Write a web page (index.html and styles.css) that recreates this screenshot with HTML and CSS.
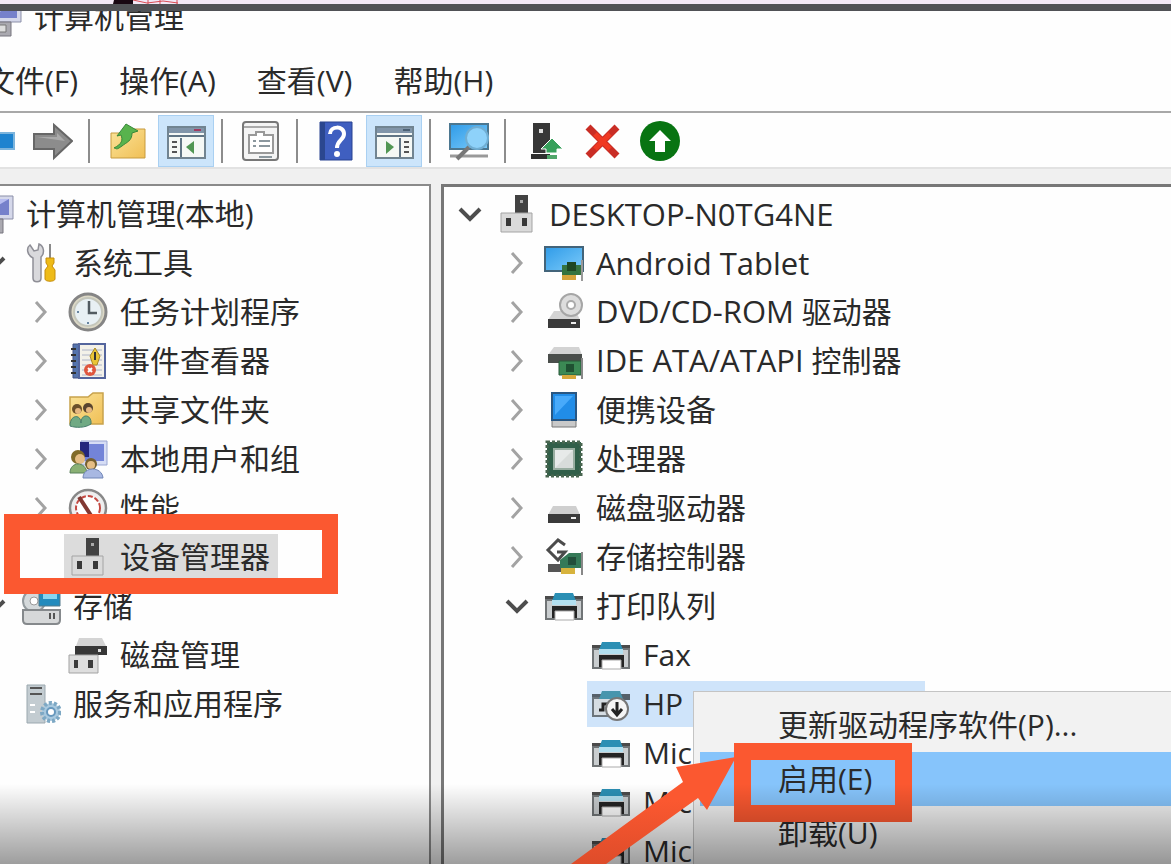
FILE: index.html
```
<!DOCTYPE html>
<html lang="zh-CN">
<head>
  <meta charset="utf-8">
  <title>计算机管理</title>
  <link rel="stylesheet" href="styles.css">
</head>
<body>
  <!-- Icon set, 40 x 40 each -->
  <svg class="sprite" aria-hidden="true">
    <defs>
      <linearGradient id="blue" x1="0" y1="0" x2="1" y2="1"><stop offset="0" stop-color="#2f9be8"/><stop offset="1" stop-color="#7ccbfa"/></linearGradient>
      <linearGradient id="gold" x1="0" y1="0" x2="1" y2="1"><stop offset="0" stop-color="#fbe49a"/><stop offset="1" stop-color="#f0bf55"/></linearGradient>
    </defs>
    <symbol id="computer" viewBox="0 0 40 40">
      <path d="M10 2h29v23H10z" fill="#d5d8ea" stroke="#8b8fa8"/>
      <path d="M14 5h21v16H14z" fill="#7681cb"/><path d="M14 5h21L14 17z" fill="#b7bdf0"/>
      <path d="M4 25h25v14H4z" fill="#aaa9b0" stroke="#76757e"/><path d="M13 28h11v7H13z" fill="#ddd" stroke="#777"/>
    </symbol>
    <symbol id="device" viewBox="0 0 40 40">
      <path d="M18 1h13v18H18z" fill="#424242"/><path d="M23 6h3v3h-3z" fill="#aaa"/>
      <path d="M4 19h31v19H4z" fill="#dadada" stroke="#a4a4a4"/>
      <path d="M9 24h5v8H9zM25 24h5v8h-5z" fill="#383838"/>
    </symbol>
    <symbol id="tools" viewBox="0 0 40 40">
      <path d="M9 2l4 6 4-1 1-6c5 2 6 9 2 13v21c0 5-8 5-8 0V15C6 12 5 5 9 2z" fill="#d9d9dc" stroke="#8e8e96" stroke-width="1.5"/>
      <path d="M28 1h2v15h-2z" fill="#8a8a8a"/><path d="M25 15h8v5l-2 3 3 4v9c0 3-10 3-10 0v-9l3-4-2-3z" fill="#eebb18" stroke="#c68e0b"/>
    </symbol>
    <symbol id="clock" viewBox="0 0 40 40">
      <circle cx="20" cy="20" r="18" fill="#ddd9c6" stroke="#858585" stroke-width="3"/><circle cx="20" cy="20" r="14" fill="#e8f0f4" stroke="#c4c6bb" stroke-width="2"/>
      <path d="M21 9v12h8" fill="none" stroke="#525b61" stroke-width="2.5"/><path d="M9 20h2M20 30v2" stroke="#6784a0" stroke-width="2"/>
    </symbol>
    <symbol id="events" viewBox="0 0 40 40">
      <path d="M5 3h10v34H5z" fill="#5574ac" stroke="#405083"/><path d="M11 3h26v34H11z" fill="#f3f1e9" stroke="#54659d" stroke-width="2"/>
      <path d="M14 9h20M14 14h20M14 19h20M14 24h20M14 29h20M14 34h20" stroke="#aeb4c8"/>
      <path d="M3 8h5M3 14h5M3 20h5M3 26h5M3 32h5" stroke="#333" stroke-width="2"/>
      <path d="M27 7l5 8-3 9h-4l-3-9z" fill="#eac536" stroke="#a88929"/><path d="M27 11v8" stroke="#333" stroke-width="2"/>
      <circle cx="22" cy="29" r="6" fill="#df573e"/><path d="M20 27l4 4m0-4l-4 4" stroke="#fff" stroke-width="2"/>
    </symbol>
    <symbol id="shared" viewBox="0 0 40 40">
      <path d="M2 7h18l5-4h10v31H2z" fill="url(#gold)" stroke="#c8a24c" stroke-width="1.5"/>
      <circle cx="9" cy="19" r="5" fill="#6b502a"/><circle cx="20" cy="18" r="5" fill="#59452f"/><circle cx="10" cy="21" r="3" fill="#e6b780"/><circle cx="21" cy="20" r="3" fill="#e6b780"/>
      <path d="M2 36c0-12 11-12 11-3 0-10 11-9 10 1-6 4-15 4-21 2z" fill="#70aa84" stroke="#467d6b"/>
    </symbol>
    <symbol id="users" viewBox="0 0 40 40">
      <path d="M13 2h26v24H13z" fill="#d6ddf5" stroke="#9aa6d1"/><path d="M16 5h20v17H16z" fill="#7384d8"/><path d="M12 3h9v15h-9z" fill="#24277d"/>
      <circle cx="10" cy="18" r="7" fill="#816b28"/><circle cx="12" cy="20" r="5" fill="#e5bd84"/><path d="M2 34c0-12 16-12 17 0z" fill="#8ab074" stroke="#59805b"/>
      <circle cx="23" cy="25" r="6" fill="#76602f"/><circle cx="23" cy="26" r="4" fill="#e5bd84"/><path d="M15 39c0-12 19-12 20 0z" fill="#a8b8e2" stroke="#7186b7"/>
    </symbol>
    <symbol id="gauge" viewBox="0 0 40 40">
      <circle cx="20" cy="20" r="18" fill="#eee" stroke="#888" stroke-width="2.5"/><circle cx="20" cy="20" r="12" fill="#fff" stroke="#c44a43" stroke-width="2" stroke-dasharray="5 2"/><path d="M11 9l13 20" stroke="#813832" stroke-width="4"/>
    </symbol>
    <symbol id="storage" viewBox="0 0 40 40">
      <circle cx="13" cy="15" r="11" fill="#d4d9db" stroke="#929a9e" stroke-width="2"/><circle cx="13" cy="15" r="4" fill="#fff" stroke="#999"/>
      <path d="M18 6h21v14H18z" fill="#238bbd" stroke="#557b8b"/><path d="M22 8h14v5H22z" fill="#86d4f1"/>
      <path d="M2 24h37v10q0 4-4 4H6q-4 0-4-4z" fill="#d6d8d9" stroke="#85898c" stroke-width="2"/><path d="M29 27v6M33 27v6" stroke="#555" stroke-width="2"/>
    </symbol>
    <symbol id="diskmgmt" viewBox="0 0 40 40">
      <path d="M11 3h23l4 8H8z" fill="#d4d4d4"/><path d="M7 11h32v9H7z" fill="#373737"/><path d="M30 14h3v3h-3z" fill="#ddd"/>
      <path d="M1 20h29v18H1z" fill="#dedede" stroke="#a3a3a3"/><path d="M6 25h4v8H6zM20 25h5v8h-5z" fill="#3c3c3c"/>
    </symbol>
    <symbol id="services" viewBox="0 0 40 40">
      <path d="M6 1h18v38H6z" fill="#c3ccd1" stroke="#9ba8af"/><path d="M9 4h12M9 10h12" stroke="#555" stroke-width="2"/><path d="M9 21h5M9 28h5" stroke="#fff" stroke-width="2"/>
      <circle cx="30" cy="28" r="9" fill="#a9c9df" stroke="#7da8c4" stroke-width="4" stroke-dasharray="3 2"/><circle cx="30" cy="28" r="4" fill="#fff" stroke="#6798bd" stroke-width="2"/>
    </symbol>
    <symbol id="monitor" viewBox="0 0 40 40">
      <path d="M1 4h38v24H1z" fill="url(#blue)" stroke="#43647a" stroke-width="2"/>
      <path d="M18 22h19v10H18z" fill="#357340"/><path d="M23 19h9v9h-9z" fill="#1f4723"/><path d="M18 32h14v5H18z" fill="#d5a33b"/><path d="M38 17v21" stroke="#999" stroke-width="2"/>
    </symbol>
    <symbol id="dvd" viewBox="0 0 40 40">
      <path d="M10 19h22l4 9H4z" fill="#d4d4d4"/><circle cx="27" cy="13" r="11" fill="#ddd" stroke="#a6a6a6" stroke-width="2"/><circle cx="27" cy="13" r="4" fill="#fff" stroke="#aaa" stroke-width="2"/>
      <path d="M4 27h32v9H4z" fill="#3a3a3a"/><path d="M27 31h5" stroke="#eee" stroke-width="2"/>
    </symbol>
    <symbol id="ide" viewBox="0 0 40 40">
      <path d="M10 6h25l3 8H4z" fill="#d3d3d3"/><path d="M4 13h34v9H4z" fill="#4a4e4b"/><path d="M15 20h22v14H15z" fill="#3b8954" stroke="#285939"/><path d="M22 23h8v8h-8z" fill="#1f5132"/><path d="M18 34h14v4H18z" fill="#d7a83c"/><path d="M38 17v21" stroke="#888" stroke-width="2"/>
    </symbol>
    <symbol id="portable" viewBox="0 0 40 40"><path d="M8 3h24v34H8z" fill="#c9c9c9" stroke="#777"/><path d="M8 3h24v27H8z" fill="#218de8" stroke="#295783" stroke-width="2"/><path d="M11 6h18L11 25z" fill="#48aafa"/></symbol>
    <symbol id="cpu" viewBox="0 0 40 40"><path d="M3 3h34v34H3z" fill="#315f49" stroke="#496650" stroke-width="3" stroke-dasharray="3 2"/><path d="M10 10h20v20H10z" fill="#d8dcda" stroke="#98ada0" stroke-width="2"/><path d="M11 11h18L11 29z" fill="#fff" opacity=".4"/></symbol>
    <symbol id="drive" viewBox="0 0 40 40"><path d="M9 18h23l4 9H4z" fill="#cfcfcf"/><path d="M4 26h32v9H4z" fill="#3a3a3a"/><path d="M27 30h5" stroke="#eee" stroke-width="2"/></symbol>
    <symbol id="controller" viewBox="0 0 40 40">
      <path d="M4 27h17v8H4z" fill="#555"/><path d="M21 8l-7-5L4 13l10 10 7-8h-8" fill="none" stroke="#4b4b4b" stroke-width="3"/>
      <path d="M16 23l9-7h12v15H16z" fill="#357a58"/><path d="M24 20h8v8h-8z" fill="#234f3b"/><path d="M17 31h14v6H17z" fill="#d7b33d"/><path d="M38 15v23" stroke="#888" stroke-width="2"/>
    </symbol>
    <symbol id="printer" viewBox="0 0 40 40">
      <path d="M1 10h38v6H1z" fill="#4b4b4b"/><path d="M2 14h36v19H2z" fill="#c9cdcf" stroke="#707476" stroke-width="2"/><path d="M11 7h18l3 8H8z" fill="#2b8fb4"/><path d="M8 14h24v5H8z" fill="#b2dfef"/><path d="M8 20h25v6H8z" fill="#242424"/><path d="M8 24h3v8H8zM30 24h3v8h-3z" fill="#242424"/><path d="M11 25h19v9H11z" fill="#fff" stroke="#aaa"/>
    </symbol>
    <symbol id="printer-off" viewBox="0 0 40 40">
      <path d="M1 10h38v6H1z" fill="#55606a"/><path d="M2 14h26v18H2z" fill="#d5dce2" stroke="#6c757c" stroke-width="2"/><path d="M11 7h18l3 8H8z" fill="#4795ad"/><path d="M8 26h4v-6h8" fill="none" stroke="#222" stroke-width="3"/>
      <circle cx="26" cy="25" r="11" fill="#f5f5f5" stroke="#777" stroke-width="2"/><path d="M26 18v12M21 25l5 6 5-6" fill="none" stroke="#222" stroke-width="3"/>
    </symbol>
    <symbol id="right" viewBox="0 0 24 24"><path d="M7 2l9 10-9 10" fill="none" stroke="#a3a3a3" stroke-width="3"/></symbol>
    <symbol id="down" viewBox="0 0 24 24"><path d="M2 7l10 10L22 7" fill="none" stroke="#4d4d4d" stroke-width="4"/></symbol>
  </svg>

  <div class="backdrop">
    <svg width="190" height="4" viewBox="0 0 190 4"><path d="M114 0h19v4h-20z" fill="#180712"/><path d="M133 0l14 3 16-2 15 2M148 0v4M160 0v4M177 0v4" stroke="#d94c55" fill="none"/></svg>
  </div>

  <header class="titlebar">
    <svg class="icon"><use href="#computer"/></svg>
    <span>计算机管理</span>
  </header>

  <nav class="menubar">
    <button>文件(F)</button>
    <button>操作(A)</button>
    <button>查看(V)</button>
    <button>帮助(H)</button>
  </nav>

  <div class="toolbar">
    <button aria-label="后退"><svg class="icon" viewBox="0 0 40 40"><path d="M1 20L18 4v8h21v16H18v8z" fill="#1e83cf" stroke="#7cb4dc" stroke-width="2"/></svg></button>
    <button aria-label="前进"><svg class="icon" viewBox="0 0 40 40"><path d="M1 13h20V4l18 16-18 17v-9H1z" fill="#8c8c8c" stroke="#676767" stroke-width="2"/><path d="M4 16h20v-4l8 8z" fill="#aaa"/></svg></button>
    <span class="sep"></span>
    <button aria-label="上移"><svg class="icon" viewBox="0 0 40 40"><path d="M3 12h10l3-4h21v29H3z" fill="url(#gold)" stroke="#c79b3e"/><path d="M6 27c8-4 9-8 7-13l-4 1 9-12 12 7-6 2c0 8-5 9-10 13-3 2-5 4-7 2z" fill="#58b34d" stroke="#37883a"/></svg></button>
    <button class="active" aria-label="显示控制台树"><svg class="icon" viewBox="0 0 40 40"><path d="M2 6h37v31H2z" fill="#f5f8f5" stroke="#718491" stroke-width="2"/><path d="M3 7h35v5H3z" fill="#8195a9"/><path d="M28 9h7" stroke="#a33c61" stroke-width="2"/><path d="M3 15h35M15 17v19" stroke="#607484" stroke-width="2"/><path d="M6 21h5M6 26h5M6 31h5" stroke="#555" stroke-width="2"/><path d="M28 20v13l-8-7z" fill="#519653"/></svg></button>
    <span class="sep"></span>
    <button aria-label="属性"><svg class="icon" viewBox="0 0 40 40"><rect x="2" y="1" width="35" height="38" rx="3" fill="#f4f4f4" stroke="#777" stroke-width="2"/><path d="M3 6h33" stroke="#aaa" stroke-width="2"/><path d="M8 14h7v-3h8v3h9v18H8z" fill="#fff" stroke="#999" stroke-width="2"/><path d="M12 20h3M18 20h11M12 25h3M18 25h11M18 36h13" stroke="#8b979e" stroke-width="2"/></svg></button>
    <span class="sep"></span>
    <button aria-label="帮助"><svg class="icon" viewBox="0 0 40 40"><path d="M4 1h32v38H4z" fill="#3f5fc0" stroke="#294391"/><path d="M4 1h5v38H4z" fill="#2b478f"/><path d="M14 13c0-8 14-9 14 0 0 6-7 6-7 14" fill="none" stroke="#fff" stroke-width="4"/><circle cx="21" cy="33" r="3" fill="#fff"/></svg></button>
    <button class="active" aria-label="显示操作窗格"><svg class="icon" viewBox="0 0 40 40"><path d="M2 6h37v31H2z" fill="#f5f8f5" stroke="#718491" stroke-width="2"/><path d="M3 7h35v5H3z" fill="#8195a9"/><path d="M29 9h7" stroke="#4d6275" stroke-width="2"/><path d="M3 15h35M26 17v19" stroke="#607484" stroke-width="2"/><path d="M30 21h5M30 26h5M30 31h5" stroke="#555" stroke-width="2"/><path d="M12 20v13l8-7z" fill="#519653"/></svg></button>
    <span class="sep"></span>
    <button aria-label="扫描检测硬件改动"><svg class="icon" viewBox="0 0 40 40"><path d="M1 3h38v25H1z" fill="url(#blue)" stroke="#4c7790" stroke-width="2"/><path d="M1 35h38" stroke="#999" stroke-width="3"/><circle cx="28" cy="17" r="11" fill="#8ed2fa" stroke="#70aed3" stroke-width="2"/><path d="M20 26L8 38" stroke="#777" stroke-width="4"/></svg></button>
    <span class="sep"></span>
    <button aria-label="更新驱动程序"><svg class="icon" viewBox="0 0 40 40"><path d="M9 2h17v30H9z" fill="#373737"/><path d="M15 8h4v4h-4z" fill="#ddd"/><path d="M7 33h19v5H7z" fill="#303030"/><path d="M28 17l11 11h-6v4H22v-4h-5z" fill="#37a05b" stroke="#fff"/><path d="M23 34h10v4H23z" fill="#50a66a"/></svg></button>
    <button aria-label="卸载"><svg class="icon" viewBox="0 0 40 40"><path d="M6 6l29 29M35 6L6 35" stroke="#c92d25" stroke-width="7"/><path d="M13 13l15 15M28 13L13 28" stroke="#f03922" stroke-width="5"/></svg></button>
    <button aria-label="启用"><svg class="icon" viewBox="0 0 40 40"><circle cx="20" cy="20" r="20" fill="#087412"/><path d="M20 9l11 11h-6v11H15V20H9z" fill="#fff"/></svg></button>
  </div>

  <main class="panes">
    <!-- Console tree -->
    <section class="pane console">
      <ul class="tree">
        <li>
          <div class="row"><span class="toggle"></span><svg class="icon"><use href="#computer"/></svg><span>计算机管理(本地)</span></div>
          <ul>
            <li>
              <div class="row"><button class="toggle" aria-label="折叠"><svg><use href="#down"/></svg></button><svg class="icon"><use href="#tools"/></svg><span>系统工具</span></div>
              <ul>
                <li class="row"><button class="toggle" aria-label="展开"><svg><use href="#right"/></svg></button><svg class="icon"><use href="#clock"/></svg><span>任务计划程序</span></li>
                <li class="row"><button class="toggle" aria-label="展开"><svg><use href="#right"/></svg></button><svg class="icon"><use href="#events"/></svg><span>事件查看器</span></li>
                <li class="row"><button class="toggle" aria-label="展开"><svg><use href="#right"/></svg></button><svg class="icon"><use href="#shared"/></svg><span>共享文件夹</span></li>
                <li class="row"><button class="toggle" aria-label="展开"><svg><use href="#right"/></svg></button><svg class="icon"><use href="#users"/></svg><span>本地用户和组</span></li>
                <li class="row"><button class="toggle" aria-label="展开"><svg><use href="#right"/></svg></button><svg class="icon"><use href="#gauge"/></svg><span>性能</span></li>
                <li class="row marked"><span class="toggle"></span><span class="item selected"><svg class="icon"><use href="#device"/></svg><span>设备管理器</span></span></li>
              </ul>
            </li>
            <li>
              <div class="row"><button class="toggle" aria-label="折叠"><svg><use href="#down"/></svg></button><svg class="icon"><use href="#storage"/></svg><span>存储</span></div>
              <ul>
                <li class="row"><span class="toggle"></span><svg class="icon"><use href="#diskmgmt"/></svg><span>磁盘管理</span></li>
              </ul>
            </li>
            <li class="row"><button class="toggle" aria-label="展开"><svg><use href="#right"/></svg></button><svg class="icon"><use href="#services"/></svg><span>服务和应用程序</span></li>
          </ul>
        </li>
      </ul>
    </section>

    <!-- Device tree -->
    <section class="pane devices">
      <ul class="tree">
        <li>
          <div class="row"><button class="toggle" aria-label="折叠"><svg><use href="#down"/></svg></button><svg class="icon"><use href="#device"/></svg><span class="latin">DESKTOP-N0TG4NE</span></div>
          <ul>
            <li class="row"><button class="toggle" aria-label="展开"><svg><use href="#right"/></svg></button><svg class="icon"><use href="#monitor"/></svg><span class="latin">Android Tablet</span></li>
            <li class="row"><button class="toggle" aria-label="展开"><svg><use href="#right"/></svg></button><svg class="icon"><use href="#dvd"/></svg><span><span class="latin">DVD/CD-ROM</span> 驱动器</span></li>
            <li class="row"><button class="toggle" aria-label="展开"><svg><use href="#right"/></svg></button><svg class="icon"><use href="#ide"/></svg><span><span class="latin">IDE ATA/ATAPI</span> 控制器</span></li>
            <li class="row"><button class="toggle" aria-label="展开"><svg><use href="#right"/></svg></button><svg class="icon"><use href="#portable"/></svg><span>便携设备</span></li>
            <li class="row"><button class="toggle" aria-label="展开"><svg><use href="#right"/></svg></button><svg class="icon"><use href="#cpu"/></svg><span>处理器</span></li>
            <li class="row"><button class="toggle" aria-label="展开"><svg><use href="#right"/></svg></button><svg class="icon"><use href="#drive"/></svg><span>磁盘驱动器</span></li>
            <li class="row"><button class="toggle" aria-label="展开"><svg><use href="#right"/></svg></button><svg class="icon"><use href="#controller"/></svg><span>存储控制器</span></li>
            <li>
              <div class="row"><button class="toggle" aria-label="折叠"><svg><use href="#down"/></svg></button><svg class="icon"><use href="#printer"/></svg><span>打印队列</span></div>
              <ul>
                <li class="row"><span class="toggle"></span><svg class="icon"><use href="#printer"/></svg><span>Fax</span></li>
                <li class="row"><span class="toggle"></span><span class="item current"><svg class="icon"><use href="#printer-off"/></svg><span>HP</span></span></li>
                <li class="row"><span class="toggle"></span><svg class="icon"><use href="#printer"/></svg><span>Mic</span></li>
                <li class="row"><span class="toggle"></span><svg class="icon"><use href="#printer"/></svg><span>Mic</span></li>
                <li class="row"><span class="toggle"></span><svg class="icon"><use href="#printer"/></svg><span>Mic</span></li>
              </ul>
            </li>
          </ul>
        </li>
      </ul>
    </section>
  </main>

  <div class="context-menu">
    <button>更新驱动程序软件(P)...</button>
    <button class="hover">启用(E)</button>
    <button>卸载(U)</button>
    <div class="callout"></div>
  </div>

  <div class="shade"></div>
  <svg class="arrow" width="170" height="120" viewBox="0 0 170 120">
    <linearGradient id="flame" x1="0" y1="0" x2="0" y2="1"><stop offset=".4" stop-color="#fb5830"/><stop offset="1" stop-color="#de4c2a"/></linearGradient>
    <path d="M0 120L112 38 105 23 165 13 136 66 127 54 35 120z" fill="url(#flame)"/>
  </svg>
</body>
</html>
```

FILE: styles.css
```
*,
*::after {
  box-sizing: border-box;
}

body {
  position: relative;
  display: flex;
  flex-direction: column;
  height: 100vh;
  margin: 0;
  overflow: hidden;
  background-color: #fefefe;
  color: #2a2a2a;
  font-family: "Open Sans", "Noto Sans CJK SC", sans-serif;
  font-size: 30px;
  font-kerning: none;
  line-height: 40px;
}

button {
  flex: none;
  padding: 0;
  border: none;
  background: none;
  color: inherit;
  font: inherit;
}

ul {
  list-style: none;
  margin: 0;
  padding: 0;
}

svg {
  display: block;
}

.sprite {
  position: absolute;
  width: 0;
  height: 0;
}

.icon {
  flex: none;
  width: 40px;
  height: 40px;
}

/* Top of the window */
.backdrop {
  position: relative;
  z-index: 1;
  flex: none;
  height: 11px;
  background-color: #f2e8f6;
  border-bottom: 7px solid #505256;
}

.titlebar {
  display: flex;
  flex: none;
  align-items: center;
  gap: 12px;
  height: 40px;
  margin-top: -14px;
  margin-left: -18px;
}

.menubar {
  display: flex;
  flex: none;
  align-items: center;
  gap: 41px;
  height: 76px;
  padding-top: 14px;
  margin-left: -15px;
  border-bottom: 2px solid #a8a8a8;
}

.toolbar {
  display: flex;
  flex: none;
  align-items: center;
  gap: 2px;
  height: 56px;
  padding-top: 2px;
  margin-left: -33px;
  border-bottom: 2px solid #e2e2e2;
}

.toolbar button {
  display: flex;
  align-items: center;
  justify-content: center;
  width: 56px;
  height: 52px;
}

.toolbar .active {
  background-color: #cce5fb;
  border: 1px solid #a9d0f2;
}

.sep {
  width: 2px;
  height: 44px;
  margin: 0 8px 0 5px;
  background-color: #8c8c8c;
}

/* Panes */
.panes {
  display: flex;
  flex: 1;
  gap: 10px;
  min-height: 0;
  padding-top: 15px;
  background-color: #f0f0f0;
}

.pane {
  overflow: hidden;
  background-color: #fefefe;
}

.console {
  flex: 0 0 431px;
  border-top: 2px solid #8a8a8a;
  border-right: 2px solid #8a8a8a;
  padding-top: 3px;
}

.console .tree {
  margin-left: -65px;
}

.devices {
  flex: 1;
  border-top: 3px solid #777;
  border-left: 3px solid #777;
  padding-top: 2px;
  padding-left: 14px;
}

.tree ul {
  padding-left: 47px;
}

.row {
  position: relative;
  display: flex;
  align-items: center;
  gap: 12px;
  height: 49px;
  white-space: nowrap;
}

.toggle {
  flex: none;
  width: 24px;
  height: 24px;
  margin-right: 3px;
}

.toggle svg {
  width: 24px;
  height: 24px;
}

.latin {
  font-size: 31px;
}

.item {
  display: flex;
  align-items: center;
  gap: 12px;
  height: 46px;
  padding: 0 8px 0 4px;
  margin-left: -4px;
}

.selected {
  background-color: #dcdcdc;
}

.current {
  width: 338px;
  background-color: #cfe4fa;
}

/* Frame round the chosen entry */
.marked {
  z-index: 1;
}

.marked::after {
  content: "";
  position: absolute;
  top: -18px;
  left: -25px;
  width: 334px;
  height: 80px;
  border: 16px solid #fb5830;
}

/* Context menu */
.context-menu {
  position: absolute;
  top: 691px;
  right: 0;
  left: 693px;
  padding: 6px 0 40px 6px;
  background-color: #f2f2f2;
  border-top: 1px solid #c4c4c4;
  border-left: 1px solid #c4c4c4;
}

.context-menu button {
  display: block;
  width: 100%;
  height: 54px;
  padding-left: 78px;
  text-align: left;
}

.context-menu .hover {
  background-color: #86c4fb;
}

.callout {
  position: absolute;
  top: 51px;
  left: 40px;
  width: 178px;
  height: 79px;
  border: 17px solid #fb5830;
}

.arrow {
  position: absolute;
  top: 744px;
  left: 571px;
}

.shade {
  position: absolute;
  right: 0;
  bottom: 0;
  left: 0;
  height: 80px;
  background: linear-gradient(rgba(0, 0, 0, 0), rgba(0, 0, 0, 0.38));
  pointer-events: none;
}
```
